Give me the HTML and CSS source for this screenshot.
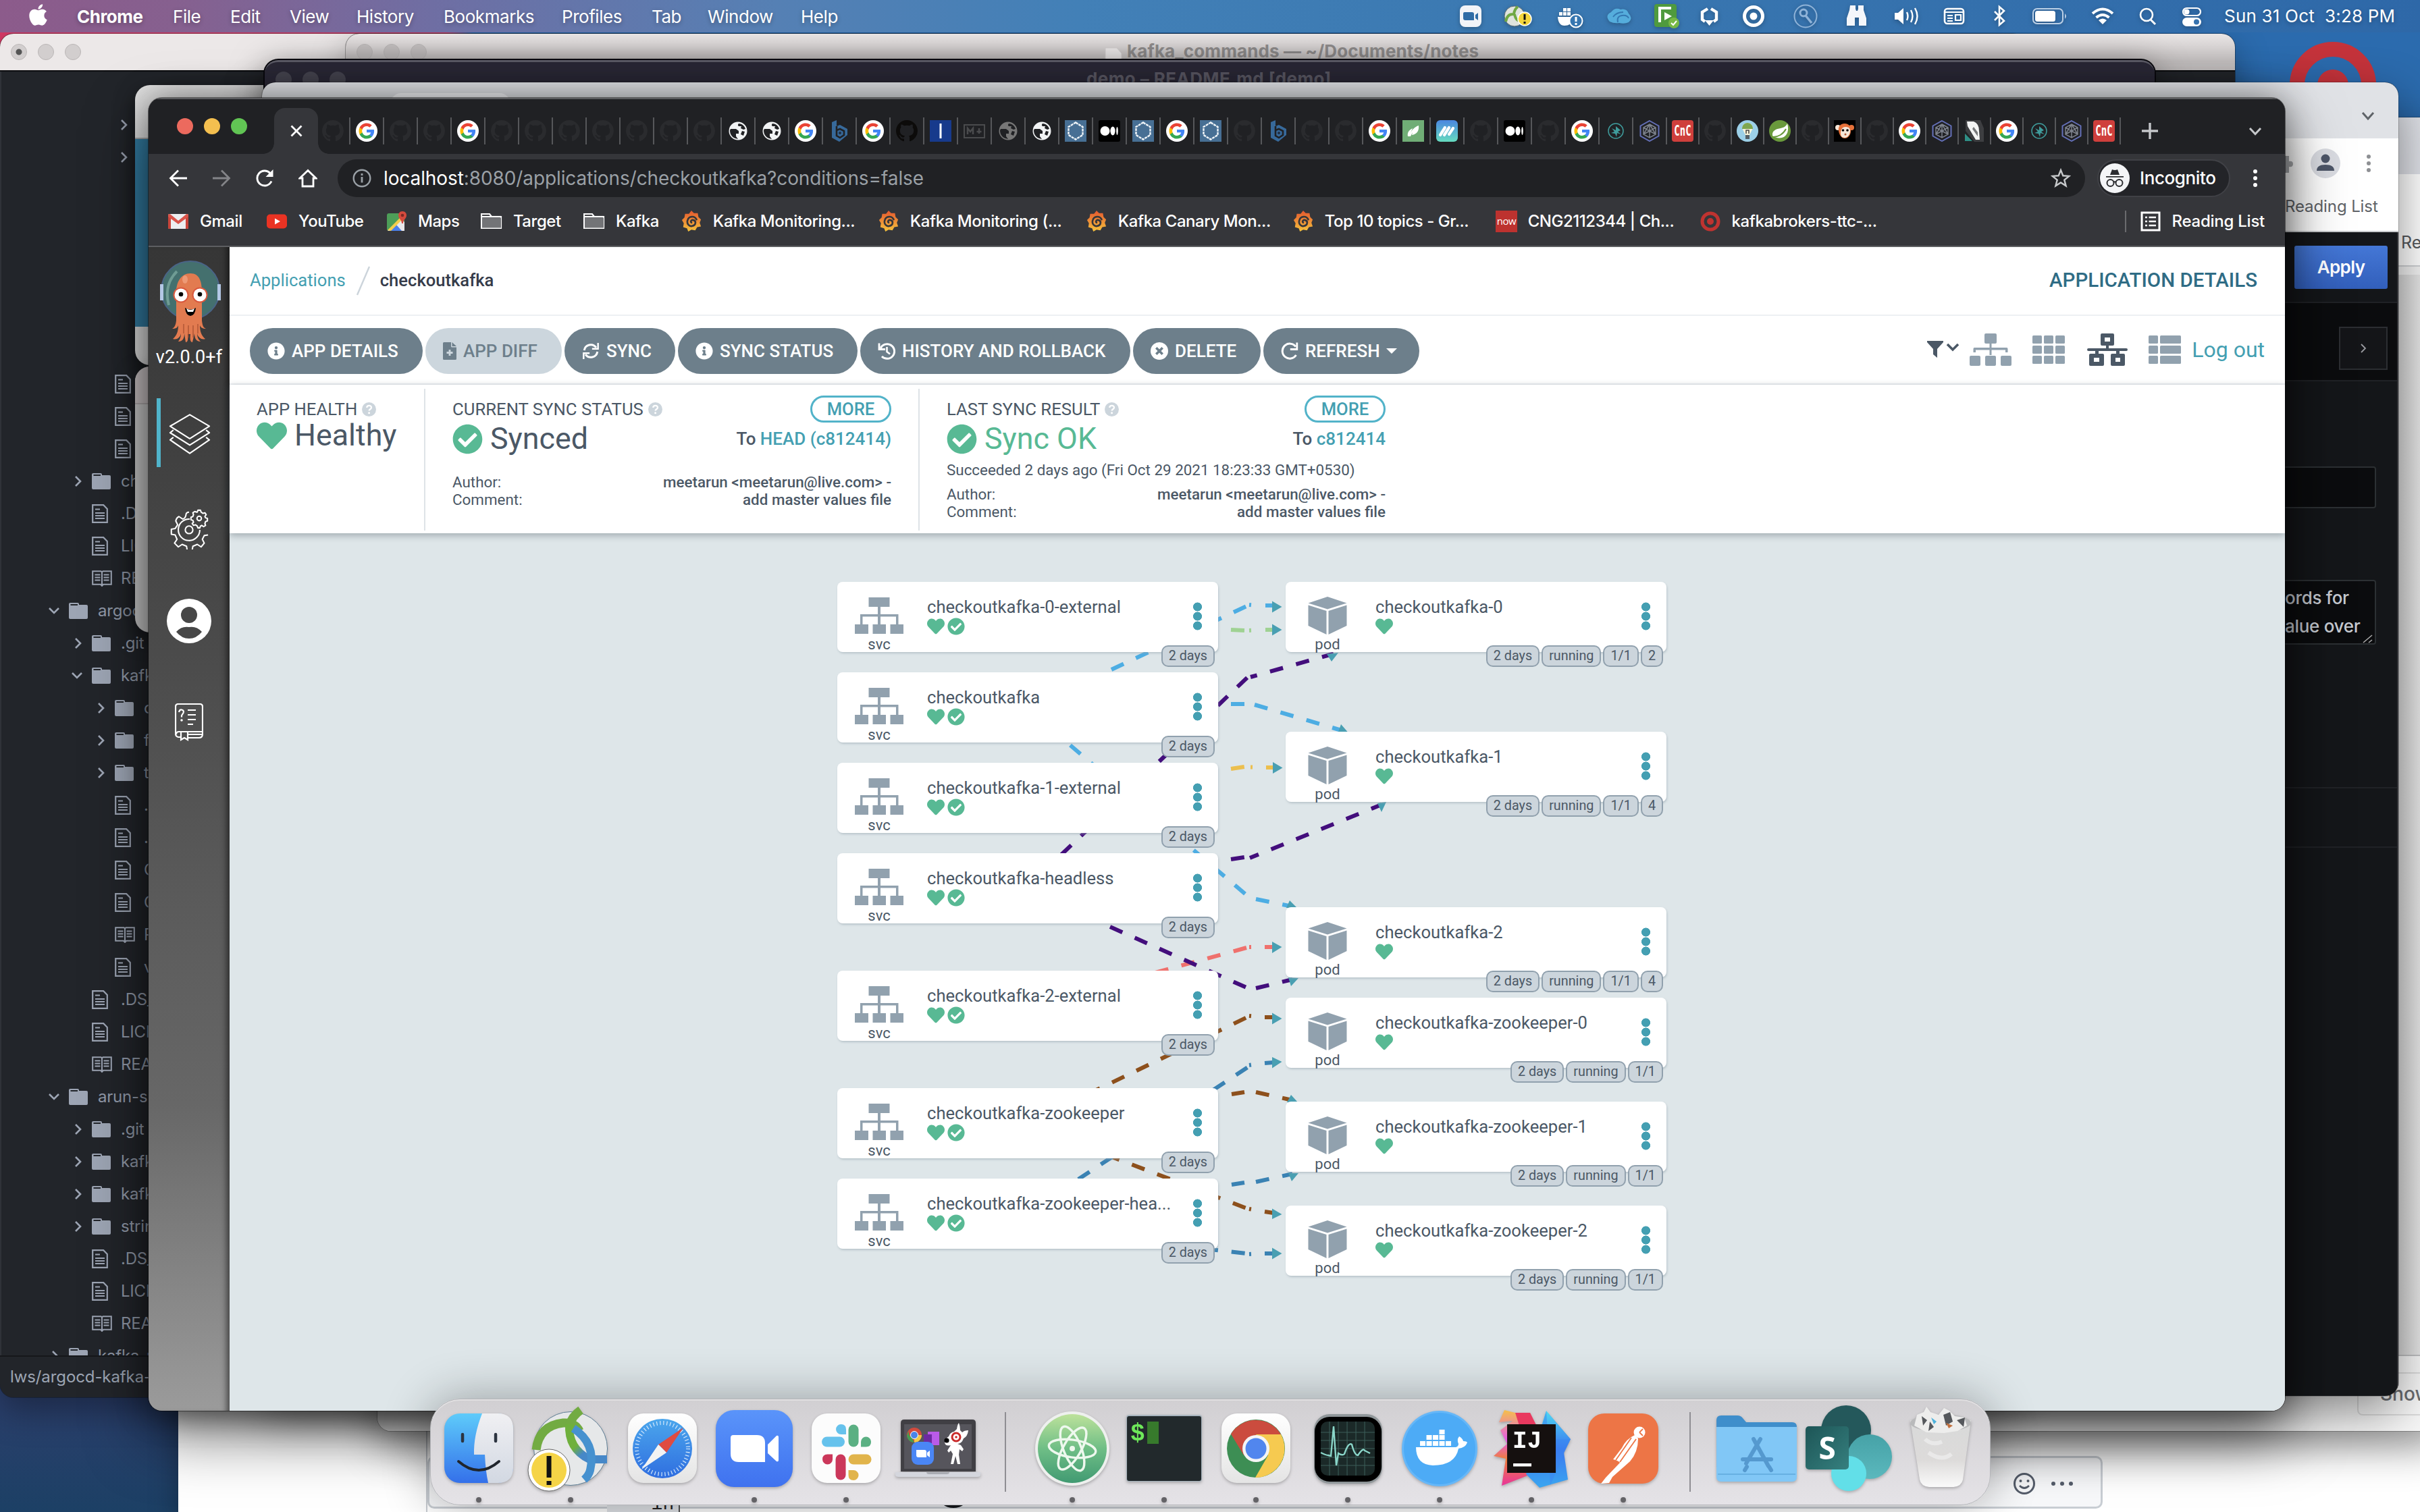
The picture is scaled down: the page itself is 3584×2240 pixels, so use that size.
FILE: index.html
```html
<!DOCTYPE html>
<html lang="en">
<head>
<meta charset="utf-8">
<title>checkoutkafka - Argo CD</title>
<link rel="stylesheet" href="styles.css">
</head>
<body>

<svg class="defs" width="0" height="0" aria-hidden="true">
  <defs>
    <linearGradient id="gFinder" x1="0" y1="0" x2="0" y2="1"><stop offset="0" stop-color="#5ecbfa"/><stop offset="1" stop-color="#3470ea"/></linearGradient>
    <linearGradient id="gFinder2" x1="0" y1="0" x2="0" y2="1"><stop offset="0" stop-color="#f0f0f3"/><stop offset="1" stop-color="#d2d8e2"/></linearGradient>
    <linearGradient id="gZoom" x1="0" y1="0" x2="0" y2="1"><stop offset="0" stop-color="#5a94fa"/><stop offset="1" stop-color="#3f72ef"/></linearGradient>
    <linearGradient id="gSafari" x1="0" y1="0" x2="0" y2="1"><stop offset="0" stop-color="#4ba6ec"/><stop offset="1" stop-color="#2f6ee0"/></linearGradient>
    <linearGradient id="gWhite" x1="0" y1="0" x2="0" y2="1"><stop offset="0" stop-color="#ffffff"/><stop offset="1" stop-color="#e4e4e4"/></linearGradient>
    <linearGradient id="gAtom" x1="0" y1="0" x2="0" y2="1"><stop offset="0" stop-color="#bde29b"/><stop offset=".5" stop-color="#6fbe86"/><stop offset="1" stop-color="#419a72"/></linearGradient>
    <linearGradient id="gAny" x1="0" y1="0" x2="1" y2="1"><stop offset="0" stop-color="#6fb03c"/><stop offset=".4" stop-color="#6fb03c"/><stop offset=".6" stop-color="#4688c8"/><stop offset="1" stop-color="#4688c8"/></linearGradient>
    <linearGradient id="gShare" x1="0" y1="0" x2="1" y2="1"><stop offset="0" stop-color="#1d5556"/><stop offset="1" stop-color="#36807f"/></linearGradient>
    <linearGradient id="gTeal" x1="0" y1="0" x2="0" y2="1"><stop offset="0" stop-color="#46a2a7"/><stop offset="1" stop-color="#5bb8bd"/></linearGradient>
    <linearGradient id="gTrash" x1="0" y1="0" x2="0" y2="1"><stop offset="0" stop-color="#d8d9d9"/><stop offset=".6" stop-color="#dddbda"/><stop offset="1" stop-color="#fafafa"/></linearGradient>
    <linearGradient id="gHash" x1="0" y1="0" x2="0" y2="1"><stop offset="0" stop-color="#4a86e0"/><stop offset="1" stop-color="#66dcc0"/></linearGradient>
    <linearGradient id="gGraf" x1="0" y1="0" x2="0" y2="1"><stop offset="0" stop-color="#e4572f"/><stop offset="1" stop-color="#f5c33c"/></linearGradient>
    <linearGradient id="gJetA" x1="0" y1="0" x2="0" y2="1"><stop offset="0" stop-color="#f5c04a"/><stop offset=".4" stop-color="#e45be8"/><stop offset=".65" stop-color="#f07f3a"/><stop offset="1" stop-color="#e8349b"/></linearGradient>
    <linearGradient id="gJetB" x1="0" y1="0" x2="0" y2="1"><stop offset="0" stop-color="#4fd8f2"/><stop offset=".5" stop-color="#3a78f0"/><stop offset="1" stop-color="#3aa6f0"/></linearGradient>
  </defs>

  <symbol id="fGithub" viewBox="0 0 16 16"><path d="M8 0C3.58 0 0 3.58 0 8c0 3.54 2.29 6.53 5.47 7.59.4.07.55-.17.55-.38 0-.19-.01-.82-.01-1.49-2.01.37-2.53-.49-2.69-.94-.09-.23-.48-.94-.82-1.13-.28-.15-.68-.52-.01-.53.63-.01 1.08.58 1.23.82.72 1.21 1.87.87 2.33.66.07-.52.28-.87.51-1.07-1.78-.2-3.64-.89-3.64-3.95 0-.87.31-1.59.82-2.15-.08-.2-.36-1.02.08-2.12 0 0 .67-.21 2.2.82.64-.18 1.32-.27 2-.27.68 0 1.36.09 2 .27 1.53-1.04 2.2-.82 2.2-.82.44 1.1.16 1.92.08 2.12.51.56.82 1.27.82 2.15 0 3.07-1.87 3.75-3.65 3.95.29.25.54.73.54 1.48 0 1.07-.01 1.93-.01 2.2 0 .21.15.46.55.38A8.013 8.013 0 0016 8c0-4.42-3.58-8-8-8z"/></symbol>
  <symbol id="fGoogle" viewBox="0 0 32 32"><circle cx="16" cy="16" r="16" fill="#fff"/><g transform="translate(3.4 3.4) scale(1.05)"><path fill="#4285F4" d="M22.56 12.25c0-.78-.07-1.53-.2-2.25H12v4.26h5.92c-.26 1.37-1.04 2.53-2.21 3.31v2.77h3.57c2.08-1.92 3.28-4.74 3.28-8.09z"/><path fill="#34A853" d="M12 23c2.97 0 5.46-.98 7.28-2.66l-3.57-2.77c-.98.66-2.23 1.06-3.71 1.06-2.86 0-5.29-1.93-6.16-4.53H2.18v2.84C3.99 20.53 7.7 23 12 23z"/><path fill="#FBBC05" d="M5.84 14.09c-.22-.66-.35-1.36-.35-2.09s.13-1.43.35-2.09V7.07H2.18C1.43 8.55 1 10.22 1 12s.43 3.45 1.18 4.93l3.66-2.84z"/><path fill="#EA4335" d="M12 5.38c1.62 0 3.06.56 4.21 1.64l3.15-3.15C17.45 2.09 14.97 1 12 1 7.7 1 3.99 3.47 2.18 7.07l3.66 2.84c.87-2.6 3.3-4.53 6.16-4.53z"/></g></symbol>
  <symbol id="fGlobe" viewBox="0 0 32 32"><circle cx="16" cy="16" r="13.500" fill="currentColor"/><path d="M5 13h8l4 3v4h-4v4l3 4-4-1c-5-2-8-6-8-12zM17 5c-2 2-1 4 1 4h3l-1 3 4 2 3-1c-1-4-5-8-10-8zM22 16l4 1-2 6-4-2z" fill="#202124"/></symbol>
  <symbol id="fB" viewBox="0 0 32 32"><path d="M5 3l7-3v9l5-2 11 6v9l-12 10L5 26z" fill="#37699a"/><path d="M12 9v14l5 3 6-4v-6l-6-3-5 2" fill="none" stroke="#202124" stroke-width="2.600"/><circle cx="17" cy="19" r="2" fill="#1f2f44"/></symbol>
  <symbol id="fBar" viewBox="0 0 32 32"><path d="M0 0h32v32H0z" fill="#173a8c"/><path d="M14.500 5h3v22h-3z" fill="#fff"/></symbol>
  <symbol id="fMd" viewBox="0 0 32 32"><rect x="1" y="7" width="30" height="19" fill="none" stroke="#4a4b4d" stroke-width="2"/><path d="M6 21v-9l4 5 4-5v9M23 12v8M19.500 17h7" fill="none" stroke="#4a4b4d" stroke-width="2.500"/></symbol>
  <symbol id="fHex" viewBox="0 0 32 32"><path d="M0 0h32v32H0z" fill="#476f94"/><path d="M16 3.500l10.500 6.500v12L16 28.500 5.500 22V10z" fill="none" stroke="#eef3f7" stroke-width="2.400" stroke-dasharray="4 1"/></symbol>
  <symbol id="fMedium" viewBox="0 0 32 32"><rect width="32" height="32" rx="3" fill="#000"/><circle cx="9.500" cy="16" r="7" fill="#fff"/><ellipse cx="21" cy="16" rx="3.600" ry="6.500" fill="#fff"/><ellipse cx="27.500" cy="16" rx="1.300" ry="6" fill="#fff"/></symbol>
  <symbol id="fLeaf" viewBox="0 0 32 32"><path d="M0 0h32v32H0z" fill="#70ad76"/><path d="M8 24c-1-5 1-9 7-12l-4 9c3-7 7-11 13-13 1 8-3 13-10 14l1-4-3 6z" fill="#fff"/></symbol>
  <symbol id="fHash" viewBox="0 0 32 32"><rect width="32" height="32" rx="6" fill="url(#gHash)"/><path d="M6 22l7-11M12 22l7-11M19 21l6-9" fill="none" stroke="#fff" stroke-width="4.200" stroke-linecap="round"/></symbol>
  <symbol id="fTeal" viewBox="0 0 32 32"><circle cx="16" cy="16" r="11" fill="none" stroke="#3f9c9c" stroke-width="1.500"/><path d="M16 9v6l-6-3 4 5-5 2 6 1 2 5 1-6 6 2-5-4 4-2z" fill="#3f9c9c"/></symbol>
  <symbol id="fNet" viewBox="0 0 32 32"><path d="M16 1l13.500 7.500v15L16 31 2.500 23.500v-15z" fill="none" stroke="#6470b8" stroke-width="2"/><path d="M16 6l9 5v10l-9 5-9-5V11zM7 11l18 10M25 11L7 21M16 6v20M16 16L7 11M16 6l9 15M16 6L7 21" fill="none" stroke="#7d828c" stroke-width="1.500"/></symbol>
  <symbol id="fCnc" viewBox="0 0 32 32"><rect width="32" height="32" rx="4" fill="#cf3f3c"/><text x="16" y="14.700" transform="scale(1 1.550)" text-anchor="middle" class="cnc">CnC</text></symbol>
  <symbol id="fBulb" viewBox="0 0 32 32"><circle cx="16" cy="16" r="16" fill="#9cd0e8"/><path d="M16 4c6 0 9 5 7 10l-4 8h-6l-4-8C7 9 10 4 16 4z" fill="#f6f2d8"/><path d="M8 13c0-6 4-9 8-9s8 3 8 9z" fill="#7ea64f"/><path d="M13 22h6v6h-6z" fill="#555f66"/><path d="M14 20v-5h4v5" fill="none" stroke="#444" stroke-width="1.500"/></symbol>
  <symbol id="fSpring" viewBox="0 0 32 32"><circle cx="16" cy="16" r="16" fill="#6a9a3c"/><path d="M5 23c-1-8 6-10 12-11 5-1 8-3 10-7 3 10 0 19-8 21-5 1-10 0-14-3z" fill="#fff"/><path d="M6 25c7 0 15-4 19-12" fill="none" stroke="#6a9a3c" stroke-width="2"/></symbol>
  <symbol id="fMonkey" viewBox="0 0 32 32"><path d="M0 0h32v32H0z" fill="#000"/><circle cx="6" cy="11" r="4" fill="#f4e6d8"/><circle cx="26" cy="11" r="4" fill="#e5713a"/><path d="M16 5c-7 0-10 5-9 11s4 11 9 11 9-5 9-11-2-11-9-11z" fill="#e5713a"/><path d="M17 10c5 0 7 2 7 6s-3 10-8 10-6-3-6-7 2-9 7-9z" fill="#f4e6d8"/><circle cx="13.500" cy="15" r="1.800"/><circle cx="20" cy="15" r="1.800"/><circle cx="17" cy="21" r="1.500" fill="#b35a35"/></symbol>
  <symbol id="fN" viewBox="0 0 32 32"><path d="M3 0h22l5 12v20H16L3 16z" fill="#3d3e41"/><path d="M5 2h10q8 3 8 14l1 13h-6L6 9z" fill="#f3f4f4"/><path d="M15 10l6 8v6l-8-11z" fill="#77797b"/><path d="M2 20l11 11H2z" fill="#2f8f86"/></symbol>
  <symbol id="fGraf" viewBox="0 0 32 34"><path fill="url(#gGraf)" d="M16 0l4 4 6 0 1 6 4 4-2 5 2 6-6 1-3 5-6-1-5 3-2-5-6-2 1-6-3-5 4-4 1-6 6 0z"/><path d="M24 14c-3-6-12-6-14 1-2 6 3 11 8 9 5-1 6-8 1-9-3-1-5 2-3 4" fill="none" stroke="#35363a" stroke-width="2.800" stroke-linecap="round"/></symbol>
  <symbol id="folder" viewBox="0 0 32 32"><path d="M1 5h12l3 4h14v17H1z" fill="#35363a" stroke="#fff" stroke-width="2.200"/><path d="M2 10.500h28v15H2z" fill="#737477"/><path d="M1 9h29" stroke="#fff" stroke-width="2.200"/></symbol>

  <symbol id="check" viewBox="0 0 512 512"><path fill="#58b994" d="M504 256c0 136.967-111.033 248-248 248S8 392.967 8 256 119.033 8 256 8s248 111.033 248 248zM227.314 387.314l184-184c6.248-6.248 6.248-16.379 0-22.627l-22.627-22.627c-6.248-6.249-16.379-6.249-22.628 0L216 308.118l-70.059-70.059c-6.248-6.248-16.379-6.248-22.628 0l-22.627 22.627c-6.248 6.248-6.248 16.379 0 22.627l104 104c6.249 6.249 16.379 6.249 22.628.001z"/></symbol>
  <symbol id="heart" viewBox="0 0 512 512"><path fill="#58b994" d="M462.3 62.6C407.5 15.9 326 24.3 275.7 76.200L256 96.500l-19.700-20.300C186.100 24.300 104.500 15.900 49.700 62.600c-62.800 53.600-66.100 149.800-9.900 207.900l193.500 199.800c12.500 12.900 32.800 12.900 45.300 0l193.500-199.800c56.300-58.100 53-154.300-9.800-207.900z"/></symbol>
  <symbol id="info" viewBox="0 0 512 512"><path fill="currentColor" d="M256 8C119.043 8 8 119.083 8 256c0 136.997 111.043 248 248 248s248-111.003 248-248C504 119.083 392.957 8 256 8zm0 110c23.196 0 42 18.804 42 42s-18.804 42-42 42-42-18.804-42-42 18.804-42 42-42zm56 254c0 6.627-5.373 12-12 12h-88c-6.627 0-12-5.373-12-12v-24c0-6.627 5.373-12 12-12h12v-64h-12c-6.627 0-12-5.373-12-12v-24c0-6.627 5.373-12 12-12h64c6.627 0 12 5.373 12 12v100h12c6.627 0 12 5.373 12 12v24z"/></symbol>
  <symbol id="help" viewBox="0 0 22 22"><circle cx="11" cy="11" r="11" fill="#ccd5dc"/><path d="M7.500 8.200c.4-4.200 7.200-4 7.200-.2 0 2.800-3.600 2.600-3.600 5.200" fill="none" stroke="#fff" stroke-width="2.400"/><circle cx="11.100" cy="16.600" r="1.600" fill="#fff"/></symbol>
  <symbol id="svc" viewBox="0 0 72 54"><g fill="#91a1ae"><path d="M20.500 0h31v14h-31zM0 40h20v14H0zM26.500 40h19.500v14H26.500zM52.500 40H72v14H52.500z"/><path d="M34 14h4v12h-4zM8 25h56.500v3.500H8zM8 28h3.500v12H8zM34 28h4v12h-4zM61 28h3.500v12H61z"/></g></symbol>
  <symbol id="pod" viewBox="0 0 58 56"><g fill="#91a1ae"><path d="M29 0l28.500 9.500L29 18.500.500 9.500z"/><path d="M.500 12.500L27.500 21v35L.500 43z"/><path d="M57.500 12.500L30.500 21v35l27-13z"/></g></symbol>

  <symbol id="chevR" viewBox="0 0 12 20"><path d="M2 3l7 7-7 7" fill="none" stroke="#9da5b4" stroke-width="2.600"/></symbol>
  <symbol id="chevD" viewBox="0 0 20 12"><path d="M3 2l7 7 7-7" fill="none" stroke="#9da5b4" stroke-width="2.600"/></symbol>
  <symbol id="tFolder" viewBox="0 0 28 24"><path d="M0 2q0-2 2-2h11q2 0 2 2v1h11q2 0 2 2v17q0 2-2 2H2q-2 0-2-2z" fill="#9da5b4"/><path d="M2.500 2h10.500v2H2.500z" fill="#22252a"/></symbol>
  <symbol id="tFile" viewBox="0 0 24 28"><path d="M1.200 1.200h16L22.800 7v19.800H1.200z" fill="none" stroke="#9da5b4" stroke-width="2.200"/><path d="M5 7.500h7M5 13h14M5 17h14M5 21h14" stroke="#9da5b4" stroke-width="2"/></symbol>
  <symbol id="tBook" viewBox="0 0 30 24"><path d="M1.200 1.200h12.300L15 2.500l1.500-1.300h12.300v19.600H17L15 23l-2-2.200H1.200zM15 2v20M4.500 6.500h8M4.500 10.500h8M4.500 14.500h8M17.500 6.500h8M17.500 10.500h8M17.500 14.500h8" fill="none" stroke="#9da5b4" stroke-width="2"/></symbol>
</svg>

<main class="desktop">
  <svg class="wallpaper-logo" viewBox="0 0 130 130"><circle cx="65" cy="65" r="53" fill="none" stroke="#c5333b" stroke-width="22"/><circle cx="65" cy="65" r="23" fill="#c5333b"/></svg>

  <!-- chat window along the bottom -->
  <section class="win chat">
    <div class="chat-pane">
      <span class="chat-word">--in</span>
      <i class="chat-dot"></i>
      <div class="composer">
        <svg class="composer-icons" viewBox="0 0 120 40"><circle cx="22" cy="20" r="14.500" fill="none" stroke="#555d6b" stroke-width="3"/><circle cx="16.500" cy="16" r="2" fill="#555d6b"/><circle cx="27.500" cy="16" r="2" fill="#555d6b"/><path d="M15 23q7 7 14 0" fill="none" stroke="#555d6b" stroke-width="2.600"/><g fill="#555d6b"><circle cx="65" cy="20" r="3"/><circle cx="78" cy="20" r="3"/><circle cx="91" cy="20" r="3"/></g></svg>
      </div>
    </div>
  </section>

  <!-- browser window behind, right edge -->
  <section class="win side-browser">
    <div class="sb-strip"></div>
    <div class="sb-tools"><span>Re</span></div>
    <div class="sb-page"></div>
    <div class="sb-foot"><span>Show</span></div>
  </section>

  <!-- editor windows -->
  <section class="win editor editor-a">
    <header class="ed-title"><i class="dot edited"></i><i class="dot"></i><i class="dot"></i></header>
    <div class="tree">
      <div class="row d4"><svg class="cr"><use href="#chevR"/></svg></div>
      <div class="row d4"><svg class="cr"><use href="#chevR"/></svg></div>
      <div class="row gap"></div>
      <div class="row d3"><svg class="fi"><use href="#tFile"/></svg></div>
      <div class="row d3"><svg class="fi"><use href="#tFile"/></svg></div>
      <div class="row d3"><svg class="fi"><use href="#tFile"/></svg></div>
      <div class="row d2"><svg class="cr"><use href="#chevR"/></svg><svg class="fo"><use href="#tFolder"/></svg><span>charts</span></div>
      <div class="row d2"><svg class="fi"><use href="#tFile"/></svg><span>.DS_Store</span></div>
      <div class="row d2"><svg class="fi"><use href="#tFile"/></svg><span>LICENSE</span></div>
      <div class="row d2"><svg class="bo"><use href="#tBook"/></svg><span>README</span></div>
      <div class="row d1"><svg class="cd"><use href="#chevD"/></svg><svg class="fo"><use href="#tFolder"/></svg><span>argocd</span></div>
      <div class="row d2"><svg class="cr"><use href="#chevR"/></svg><svg class="fo"><use href="#tFolder"/></svg><span>.git</span></div>
      <div class="row d2"><svg class="cd"><use href="#chevD"/></svg><svg class="fo"><use href="#tFolder"/></svg><span>kafka</span></div>
      <div class="row d3"><svg class="cr"><use href="#chevR"/></svg><svg class="fo"><use href="#tFolder"/></svg><span>c</span></div>
      <div class="row d3"><svg class="cr"><use href="#chevR"/></svg><svg class="fo"><use href="#tFolder"/></svg><span>f</span></div>
      <div class="row d3"><svg class="cr"><use href="#chevR"/></svg><svg class="fo"><use href="#tFolder"/></svg><span>t</span></div>
      <div class="row d3"><svg class="fi"><use href="#tFile"/></svg><span>.</span></div>
      <div class="row d3"><svg class="fi"><use href="#tFile"/></svg><span>.</span></div>
      <div class="row d3"><svg class="fi"><use href="#tFile"/></svg><span>C</span></div>
      <div class="row d3"><svg class="fi"><use href="#tFile"/></svg><span>C</span></div>
      <div class="row d3"><svg class="bo"><use href="#tBook"/></svg><span>R</span></div>
      <div class="row d3"><svg class="fi"><use href="#tFile"/></svg><span>v</span></div>
      <div class="row d2"><svg class="fi"><use href="#tFile"/></svg><span>.DS_</span></div>
      <div class="row d2"><svg class="fi"><use href="#tFile"/></svg><span>LICE</span></div>
      <div class="row d2"><svg class="bo"><use href="#tBook"/></svg><span>REA</span></div>
      <div class="row d1"><svg class="cd"><use href="#chevD"/></svg><svg class="fo"><use href="#tFolder"/></svg><span>arun-s</span></div>
      <div class="row d2"><svg class="cr"><use href="#chevR"/></svg><svg class="fo"><use href="#tFolder"/></svg><span>.git</span></div>
      <div class="row d2"><svg class="cr"><use href="#chevR"/></svg><svg class="fo"><use href="#tFolder"/></svg><span>kafka</span></div>
      <div class="row d2"><svg class="cr"><use href="#chevR"/></svg><svg class="fo"><use href="#tFolder"/></svg><span>kafka</span></div>
      <div class="row d2"><svg class="cr"><use href="#chevR"/></svg><svg class="fo"><use href="#tFolder"/></svg><span>string</span></div>
      <div class="row d2"><svg class="fi"><use href="#tFile"/></svg><span>.DS_</span></div>
      <div class="row d2"><svg class="fi"><use href="#tFile"/></svg><span>LICE</span></div>
      <div class="row d2"><svg class="bo"><use href="#tBook"/></svg><span>REA</span></div>
      <div class="row d1"><svg class="cr"><use href="#chevR"/></svg><svg class="fo"><use href="#tFolder"/></svg><span>kafka-p</span></div>
    </div>
    <footer class="ed-status">lws/argocd-kafka-</footer>
  </section>

  <section class="win editor editor-b">
    <header class="ed-title"><i class="dot"></i><i class="dot"></i><i class="dot"></i><svg class="doc" viewBox="0 0 26 34"><path d="M1 1h17l7 8v25H1z" fill="#efecec" stroke="#d4d0d0"/></svg><span>kafka_commands — ~/Documents/notes</span></header>
  </section>

  <section class="win finder-a"><div class="blue"></div></section>
  <section class="win finder-b"><div class="bar"></div></section>

  <section class="win ide"><i class="dot"></i><i class="dot"></i><i class="dot"></i><span>demo – README.md [demo]</span></section>

  <!-- light browser window -->
  <section class="win light">
    <div class="lt-strip"><i class="lt-tab"></i><svg class="lt-chev" viewBox="0 0 20 14"><path d="M2 2l8 9 8-9" fill="none" stroke="#5f6368" stroke-width="3"/></svg></div>
    <div class="lt-tools">
      <svg class="lt-icons" viewBox="0 0 168 50"><path d="M0 14h6v8q6-1 6 4t-6 4v9H0z" fill="#a9abae"/><circle cx="60" cy="25" r="22" fill="#dadce2"/><circle cx="60" cy="18" r="6.500" fill="#4d5668"/><path d="M47 36q0-9 13-9t13 9z" fill="#4d5668"/><g fill="#8e9094"><circle cx="124" cy="15" r="3"/><circle cx="124" cy="25" r="3"/><circle cx="124" cy="35" r="3"/></g></svg>
      <span>Reading List</span>
    </div>
    <div class="lt-page">
      <div class="lt-row apply"><b>Apply</b></div>
      <div class="lt-row next"><span><svg viewBox="0 0 10 16"><path d="M2 2l6 6-6 6" fill="none" stroke="#9a9ba0" stroke-width="1.800"/></svg></span></div>
      <div class="lt-input"></div>
      <div class="lt-area"><p>ords for</p><p>alue over</p><svg viewBox="0 0 16 14"><path d="M1 13L14 2M9 13l5-4" stroke="#aaa" stroke-width="1.600"/></svg></div>
      <div class="lt-sep"></div>
    </div>
  </section>

  <!-- foreground browser window -->
  <section class="win browser">
    <div class="tabs">
      <div class="lights"><i></i><i></i><i></i></div>
      <div class="tab-active"><svg viewBox="0 0 20 20"><path d="M2.500 2.500l15 15M17.500 2.500l-15 15" stroke="#fff" stroke-width="2.800"/></svg></div>
      <div class="slot"><svg class="dim"><use href="#fGithub"/></svg></div>
      <div class="slot"><svg><use href="#fGoogle"/></svg></div>
      <div class="slot"><svg class="dim"><use href="#fGithub"/></svg></div>
      <div class="slot"><svg class="dim"><use href="#fGithub"/></svg></div>
      <div class="slot"><svg><use href="#fGoogle"/></svg></div>
      <div class="slot"><svg class="dim"><use href="#fGithub"/></svg></div>
      <div class="slot"><svg class="dim"><use href="#fGithub"/></svg></div>
      <div class="slot"><svg class="dim"><use href="#fGithub"/></svg></div>
      <div class="slot"><svg class="dim"><use href="#fGithub"/></svg></div>
      <div class="slot"><svg class="dim"><use href="#fGithub"/></svg></div>
      <div class="slot"><svg class="dim"><use href="#fGithub"/></svg></div>
      <div class="slot"><svg class="dim"><use href="#fGithub"/></svg></div>
      <div class="slot"><svg class="lit"><use href="#fGlobe"/></svg></div>
      <div class="slot"><svg class="lit"><use href="#fGlobe"/></svg></div>
      <div class="slot"><svg><use href="#fGoogle"/></svg></div>
      <div class="slot"><svg><use href="#fB"/></svg></div>
      <div class="slot"><svg><use href="#fGoogle"/></svg></div>
      <div class="slot"><svg class="black"><use href="#fGithub"/></svg></div>
      <div class="slot"><svg><use href="#fBar"/></svg></div>
      <div class="slot"><svg><use href="#fMd"/></svg></div>
      <div class="slot"><svg class="grey"><use href="#fGlobe"/></svg></div>
      <div class="slot"><svg class="lit"><use href="#fGlobe"/></svg></div>
      <div class="slot"><svg><use href="#fHex"/></svg></div>
      <div class="slot"><svg><use href="#fMedium"/></svg></div>
      <div class="slot"><svg><use href="#fHex"/></svg></div>
      <div class="slot"><svg><use href="#fGoogle"/></svg></div>
      <div class="slot"><svg><use href="#fHex"/></svg></div>
      <div class="slot"><svg class="dim"><use href="#fGithub"/></svg></div>
      <div class="slot"><svg><use href="#fB"/></svg></div>
      <div class="slot"><svg class="dim"><use href="#fGithub"/></svg></div>
      <div class="slot"><svg class="dim"><use href="#fGithub"/></svg></div>
      <div class="slot"><svg><use href="#fGoogle"/></svg></div>
      <div class="slot"><svg><use href="#fLeaf"/></svg></div>
      <div class="slot"><svg><use href="#fHash"/></svg></div>
      <div class="slot"><svg class="dim"><use href="#fGithub"/></svg></div>
      <div class="slot"><svg><use href="#fMedium"/></svg></div>
      <div class="slot"><svg class="dim"><use href="#fGithub"/></svg></div>
      <div class="slot"><svg><use href="#fGoogle"/></svg></div>
      <div class="slot"><svg><use href="#fTeal"/></svg></div>
      <div class="slot"><svg><use href="#fNet"/></svg></div>
      <div class="slot thin"><svg><use href="#fCnc"/></svg></div>
      <div class="slot thin"><svg class="dim"><use href="#fGithub"/></svg></div>
      <div class="slot thin"><svg><use href="#fBulb"/></svg></div>
      <div class="slot thin"><svg><use href="#fSpring"/></svg></div>
      <div class="slot thin"><svg class="dim"><use href="#fGithub"/></svg></div>
      <div class="slot thin"><svg><use href="#fMonkey"/></svg></div>
      <div class="slot thin"><svg class="dim"><use href="#fGithub"/></svg></div>
      <div class="slot thin"><svg><use href="#fGoogle"/></svg></div>
      <div class="slot thin"><svg><use href="#fNet"/></svg></div>
      <div class="slot thin"><svg><use href="#fN"/></svg></div>
      <div class="slot thin"><svg><use href="#fGoogle"/></svg></div>
      <div class="slot thin"><svg><use href="#fTeal"/></svg></div>
      <div class="slot thin"><svg><use href="#fNet"/></svg></div>
      <div class="slot thin"><svg><use href="#fCnc"/></svg></div>
      <svg class="plus" viewBox="0 0 24 24"><path d="M12 0v24M0 12h24" stroke="#c5c7ca" stroke-width="3.400"/></svg>
      <svg class="more-tabs" viewBox="0 0 20 14"><path d="M2 2l8 8.500L18 2" fill="none" stroke="#c5c7ca" stroke-width="3"/></svg>
    </div>

    <div class="toolbar">
      <svg class="nav" viewBox="0 0 28 28"><path d="M27 14H3M14 2.500L2.500 14 14 25.500" fill="none" stroke="#fff" stroke-width="2.800"/></svg>
      <svg class="nav" viewBox="0 0 28 28"><path d="M1 14h24M14 2.500L25.500 14 14 25.500" fill="none" stroke="#838488" stroke-width="2.800"/></svg>
      <svg class="nav" viewBox="0 0 28 28"><path d="M24 18.500A11 11 0 1 1 22 6.500" fill="none" stroke="#fff" stroke-width="2.900"/><path d="M26.500 1v11h-11z" fill="#fff"/></svg>
      <svg class="nav" viewBox="0 0 28 28"><path d="M14 2.500L2 14h4v12h16V14h4z" fill="none" stroke="#fff" stroke-width="2.800" stroke-linejoin="miter"/></svg>
      <div class="omnibox">
        <svg viewBox="0 0 28 28"><circle cx="14" cy="14" r="12.300" fill="none" stroke="#9aa0a6" stroke-width="2.400"/><path d="M14 12v8.500M14 7v3" stroke="#9aa0a6" stroke-width="2.800"/></svg>
        <span class="url"><b>localhost</b>:8080/applications/checkoutkafka?conditions=false</span>
        <svg viewBox="0 0 30 30"><path d="M15 3l3.300 8.300 8.900.6-6.900 5.700 2.300 8.700L15 21.500l-7.600 4.800 2.300-8.700-6.900-5.700 8.900-.6z" fill="none" stroke="#c8cacc" stroke-width="2.400"/></svg>
      </div>
      <div class="incog">
        <svg viewBox="0 0 44 44"><circle cx="22" cy="22" r="22" fill="#f4f5f7"/><path d="M15 17l3-8q4 2 8 0l3 8zM9 19h26v1.800H9z" fill="#2b2c30"/><circle cx="15.500" cy="29" r="5" fill="none" stroke="#2b2c30" stroke-width="2"/><circle cx="28.500" cy="29" r="5" fill="none" stroke="#2b2c30" stroke-width="2"/><path d="M20 28q2-1.500 4 0" fill="none" stroke="#2b2c30" stroke-width="2"/></svg>
        <span>Incognito</span>
      </div>
      <svg class="kebab" viewBox="0 0 8 28"><g fill="#fff"><circle cx="4" cy="4" r="3"/><circle cx="4" cy="14" r="3"/><circle cx="4" cy="24" r="3"/></g></svg>
    </div>

    <div class="bookmarks">
      <a class="w1"><svg viewBox="0 0 32 32"><rect x="1" y="5" width="30" height="22" rx="2" fill="#eceef0"/><path d="M1 26V7l4 3v17H3q-2 0-2-1zM31 26V7l-4 3v17h2q2 0 2-1z" fill="#c9453b"/><path d="M1 6q2-2 4 0l11 9 11-9q2-2 4 0v3L16 20 1 9z" fill="#d9544a"/></svg>Gmail</a>
      <a class="w2"><svg viewBox="0 0 32 32"><rect x="1" y="5.500" width="30" height="21" rx="5" fill="#ea3323"/><path d="M13 11.500l8 4.500-8 4.500z" fill="#fff"/></svg>YouTube</a>
      <a class="w3"><svg viewBox="0 0 32 32"><rect x="2" y="4" width="26" height="26" rx="3" fill="#4d9e58"/><path d="M3 30L22 11l6 6v13z" fill="#e8e8ea"/><path d="M6 30l10-9 8 9z" fill="#4a80ec"/><path d="M3 29L21 11l3 3L8 30z" fill="#f3cd4c"/><path d="M25 1c4 0 6 3 6 6 0 5-5 6-5 12h-2c0-6-5-7-5-12 0-3 2-6 6-6z" fill="#d54a3d"/><circle cx="25" cy="7" r="2.300" fill="#7c2a24"/></svg>Maps</a>
      <a class="w4"><svg viewBox="0 0 32 32"><use href="#folder"/></svg>Target</a>
      <a class="w5"><svg viewBox="0 0 32 32"><use href="#folder"/></svg>Kafka</a>
      <a class="w6"><svg><use href="#fGraf"/></svg>Kafka Monitoring...</a>
      <a class="w7"><svg><use href="#fGraf"/></svg>Kafka Monitoring (...</a>
      <a class="w8"><svg><use href="#fGraf"/></svg>Kafka Canary Mon...</a>
      <a class="w9"><svg><use href="#fGraf"/></svg>Top 10 topics - Gr...</a>
      <a class="w10"><svg viewBox="0 0 32 32"><path d="M0 0h32v32H0z" fill="#bd322f"/><text x="16" y="20.500" text-anchor="middle" class="now">now</text></svg>CNG2112344 | Ch...</a>
      <a class="w11"><svg viewBox="0 0 32 32"><circle cx="16" cy="16" r="12" fill="none" stroke="#bf3330" stroke-width="5"/><circle cx="16" cy="16" r="5" fill="#bf3330"/></svg>kafkabrokers-ttc-...</a>
      <a class="reading"><svg viewBox="0 0 32 32"><rect x="3" y="3" width="26" height="26" fill="none" stroke="#fff" stroke-width="3"/><path d="M8 10h3M8 16h3M8 22h3M13.500 10H24M13.500 16H24M13.500 22H24" stroke="#fff" stroke-width="2.600"/></svg>Reading List</a>
    </div>

    <div class="page">
      <aside class="side">
        <svg class="logo" viewBox="0 0 120 146">
          <ellipse cx="62" cy="64" rx="43" ry="43" fill="#44706e" stroke="#4a6487" stroke-width="2"/>
          <path d="M30 86Q22 56 42 36" fill="none" stroke="#6f9c94" stroke-width="4"/>
          <path d="M17 55h5v24h-5zM102 55h5v24h-5z" fill="#b4c8e6"/>
          <path d="M62 39c-14 0-21 13-21 28v42c-1 8-3 10-6 12 6 0 8-2 9-5 0 10-3 16-8 20 6 2 11-2 12-8 0 6-2 9-4 12 6 0 9-4 9-12l2 13c3 0 4-4 3-12h4c-1 8 0 12 3 12l3-13c0 8 3 12 9 12-3-3-5-6-5-12 1 6 7 10 12 8-5-4-8-10-8-20 1 3 4 5 9 5-4-2-5-4-6-12V67c0-15-3-28-17-28z" fill="#e27b50"/>
          <ellipse cx="54" cy="48" rx="4" ry="6" fill="#ee9a76"/>
          <circle cx="48" cy="71" r="11.500" fill="#d9593f"/><circle cx="76" cy="71" r="11.500" fill="#d9593f"/>
          <circle cx="48" cy="71" r="9.500" fill="#fff"/><circle cx="76" cy="71" r="9.500" fill="#fff"/>
          <circle cx="48" cy="70" r="3.300"/><circle cx="76" cy="70" r="3.300"/>
          <path d="M54 90q8 5 16 0-1 11-8 12-7-1-8-12z"/><path d="M56 91q6 4 12 0l-2 5h-8z" fill="#fff"/>
          <path d="M52 114v14M59 116v18M66 116v18M73 114v14" stroke="#a54d30" stroke-width="1.200"/>
        </svg>
        <p class="ver">v2.0.0+f</p>
        <svg class="side-icon active" viewBox="0 0 64 64"><g fill="none" stroke="#fff" stroke-width="2.200" stroke-linejoin="round"><path d="M32 2.500L62 20 32 39 2 20z"/><path d="M7 26l-5 4 30 19 30-19-5-4"/><path d="M7 37l-5 4 30 20.500L62 41l-5-4"/></g></svg>
        <svg class="side-icon gears" viewBox="0 0 64 64"><g fill="none" stroke="#fff" stroke-width="2.200" stroke-linejoin="round"><path d="M32 5q-5 0-5 5-1 5-5 6l-6-4q-4 2-5 7l3 6-4 6-6 1v8l6 1 3 7-4 6 6 6 6-4 7 3 1 6h8l1-6 7-3 6 4 5-6-3-6 3-6 6-1"/><path d="M33 16a17 17 0 1 0 16 17"/><circle cx="32" cy="33" r="6"/><path d="M45 5l1-3h4l1 3 3 2 3-1 2 3-2 3 1 2 3 1v4l-3 1-1 3 1 3-3 2-3-2-2 1-1 3h-3l-1-3-3-2-3 1-2-3 2-2-1-3-3-1v-4l3-1 1-3-1-3 3-2 3 1z"/><circle cx="48" cy="15" r="3.500"/></g></svg>
        <svg class="side-icon user" viewBox="0 0 66 66"><circle cx="33" cy="33" r="33" fill="#fff"/><circle cx="33" cy="24" r="12" fill="#474747"/><path d="M14 49q8-9 19-7 11-2 19 7-8 10-19 10t-19-10z" fill="#474747"/></svg>
        <svg class="side-icon book" viewBox="0 0 42 56"><g fill="none" stroke="#fff" stroke-width="2.200"><path d="M8 50H5q-4-1-4-5V5q0-4 4-4h32q4 0 4 4v40q0 6-5 6H19"/><path d="M2 46q0-4 4-4h34M19 46h21"/><path d="M9 42v12l5-3 5 3V42"/><path d="M19 10h12M19 17h12M19 24h12M19 31h8"/><path d="M6 13q1-4 4-3.500 4 1 2.500 4.500L10 18v2.500"/></g><circle cx="10" cy="25" r="1.800" fill="#fff"/></svg>
      </aside>

      <div class="content">
        <header class="crumbs">
          <a>Applications</a><svg viewBox="0 0 22 44"><path d="M20 1L2 43" stroke="#ccd4db" stroke-width="2.400"/></svg><b>checkoutkafka</b>
          <strong>APPLICATION DETAILS</strong>
        </header>
        <div class="actions">
          <button class="b1"><svg><use href="#info"/></svg>APP DETAILS</button>
          <button class="b2 off"><svg class="narrow" viewBox="0 0 20 26"><path d="M0 1.500Q0 0 1.500 0H12v6q0 1.500 1.500 1.500H20V24.500q0 1.500-1.500 1.500h-17Q0 26 0 24.500zM13.500 0L20 6h-6.500z" fill="#6d7f8b"/><path d="M10 11v9M5.500 15.500h9" stroke="#ccd6dd" stroke-width="2.800"/></svg>APP DIFF</button>
          <button class="b3"><svg viewBox="0 0 28 28"><g fill="none" stroke="#fff" stroke-width="3.200"><path d="M3.500 13A10.500 10.500 0 0 1 22.500 8.500M24.500 15A10.500 10.500 0 0 1 5.500 19.500"/><path d="M25.500 1v9.500H16M2.500 27v-9.500H12" stroke-width="2.600"/></g></svg>SYNC</button>
          <button class="b4"><svg><use href="#info"/></svg>SYNC STATUS</button>
          <button class="b5"><svg viewBox="0 0 26 26"><g fill="none" stroke="#fff" stroke-width="3"><path d="M4 9A10.800 10.800 0 1 1 6 21"/><path d="M2 1.500v9h9" stroke-width="2.800"/><path d="M13.500 7v7l4.500 3.500" stroke-width="2.600"/></g></svg>HISTORY AND ROLLBACK</button>
          <button class="b6"><svg viewBox="0 0 26 26"><circle cx="13" cy="13" r="13" fill="#fff"/><path d="M8.300 8.300l9.400 9.400M17.700 8.300l-9.400 9.400" stroke="#6d7f8b" stroke-width="3.600"/></svg>DELETE</button>
          <button class="b7"><svg viewBox="0 0 26 26"><g fill="none" stroke="#fff" stroke-width="3"><path d="M22.500 19A11 11 0 1 1 22 6.500"/><path d="M23.800.500v10h-10" stroke-width="2.800"/></g></svg>REFRESH<svg class="caret" viewBox="0 0 16 8"><path d="M0 0h16L8 8z" fill="#fff"/></svg></button>
          <div class="views">
            <svg class="v-filter" viewBox="0 0 48 28"><path d="M0 1h24v2L15 13v13l-6-5v-8L0 3z" fill="#4b5866"/><path d="M30 6l8 8 8-8" fill="none" stroke="#4b5866" stroke-width="3.600"/></svg>
            <svg class="v-tree" viewBox="0 0 62 48"><g fill="#91a1ae"><rect x="22" y="0" width="18" height="15" rx="2"/><path d="M29.500 15h3v6h-3zM6 21h49q1.500 0 1.500 2v5H53v-3.500H32.500V32h-3v-7.500H9V28H5.500v-5q0-2 1.500-2z"/><rect x="0" y="33" width="16" height="15" rx="2"/><rect x="23" y="33" width="16" height="15" rx="2"/><rect x="46" y="33" width="16" height="15" rx="2"/></g></svg>
            <svg class="v-grid" viewBox="0 0 48 42"><g fill="#91a1ae"><rect width="14" height="12" rx="1.500"/><rect x="17" width="14" height="12" rx="1.500"/><rect x="34" width="14" height="12" rx="1.500"/><rect y="15" width="14" height="12" rx="1.500"/><rect x="17" y="15" width="14" height="12" rx="1.500"/><rect x="34" y="15" width="14" height="12" rx="1.500"/><rect y="30" width="14" height="12" rx="1.500"/><rect x="17" y="30" width="14" height="12" rx="1.500"/><rect x="34" y="30" width="14" height="12" rx="1.500"/></g></svg>
            <svg class="v-net" viewBox="0 0 60 48"><path d="M20 2q0-2 2-2h16q2 0 2 2v14q0 2-2 2h-6v4h26q2 0 2 2t-2 2H48v4h6q2 0 2 2v14q0 2-2 2H37q-2 0-2-2V32q0-2 2-2h6v-4H17v4h6q2 0 2 2v14q0 2-2 2H5q-2 0-2-2V32q0-2 2-2h7v-4H2q-2 0-2-2t2-2h26v-4h-6q-2 0-2-2zM26 6v6h8V6zM10 36v6h8v-6zM42 36v6h7v-6z" fill="#4b5866" fill-rule="evenodd"/></svg>
            <svg class="v-list" viewBox="0 0 48 42"><g fill="#91a1ae"><rect width="14" height="12" rx="1.500"/><rect x="17" width="31" height="12" rx="1.500"/><rect y="15" width="14" height="12" rx="1.500"/><rect x="17" y="15" width="31" height="12" rx="1.500"/><rect y="30" width="14" height="12" rx="1.500"/><rect x="17" y="30" width="31" height="12" rx="1.500"/></g></svg>
            <a>Log out</a>
          </div>
        </div>

        <div class="status">
          <section class="s-health">
            <h4>APP HEALTH<svg><use href="#help"/></svg></h4>
            <h2><svg><use href="#heart"/></svg>Healthy</h2>
          </section>
          <section class="s-block">
            <h4>CURRENT SYNC STATUS<svg><use href="#help"/></svg><em>MORE</em></h4>
            <h2><svg><use href="#check"/></svg>Synced<small>To <a>HEAD (c812414)</a></small></h2>
            <dl><dt>Author:</dt><dd>meetarun &lt;meetarun@live.com&gt; -</dd><dt>Comment:</dt><dd>add master values file</dd></dl>
          </section>
          <section class="s-block last">
            <h4>LAST SYNC RESULT<svg><use href="#help"/></svg><em>MORE</em></h4>
            <h2><svg><use href="#check"/></svg><span class="ok">Sync OK</span><small>To <a>c812414</a></small></h2>
            <p>Succeeded 2 days ago (Fri Oct 29 2021 18:23:33 GMT+0530)</p>
            <dl><dt>Author:</dt><dd>meetarun &lt;meetarun@live.com&gt; -</dd><dt>Comment:</dt><dd>add master values file</dd></dl>
          </section>
        </div>

        <div class="canvas">
          <svg class="edges" viewBox="340 790 3044 1300">
            <g fill="none" stroke-width="6" stroke-dasharray="20 20">
              <g stroke="#4dade3">
                <path d="M1646 992L1846 898"/><path d="M1850 896L1872 898" stroke-dasharray="3 22"/>
                <path d="M1823 1043h20M1858 1044L1990 1083"/>
                <path d="M1585 1104L1846 1326M1860 1332L1914 1343"/>
              </g>
              <path stroke="#9fd293" d="M1823 933l20 1"/><path stroke="#9fd293" stroke-dasharray="3 22" d="M1850 934L1872 933"/>
              <path stroke="#ecbf4e" d="M1823 1139l20-3"/><path stroke="#ecbf4e" stroke-dasharray="3 22" d="M1852 1136.500L1872 1137"/>
              <g stroke="#ef716d"><path d="M1711 1441L1846 1404"/><path stroke-dasharray="3 22" d="M1850 1403H1872"/></g>
              <g stroke="#430e7c">
                <path d="M1572 1266L1848 1003"/><path stroke-dashoffset="10" d="M1852 1003L1975 968.500"/>
                <path d="M1823 1273l20-3"/><path stroke-dashoffset="6" d="M1851 1271L2046 1192"/>
                <path d="M1644 1373L1846 1463M1860 1464L1914 1451"/>
              </g>
              <g stroke="#8d501c">
                <path d="M1611 1621L1847 1507"/><path stroke-dasharray="3 22" d="M1850 1505L1872 1507"/>
                <path d="M1824 1621l19-3M1860 1618L1914 1630"/>
                <path d="M1639 1711L1846 1790"/><path stroke-dasharray="3 22" d="M1850 1791L1872 1795"/>
              </g>
              <g stroke="#3a82b3">
                <path d="M1597 1747L1848 1581"/><path stroke-dasharray="3 22" d="M1850 1578L1872 1575"/>
                <path d="M1824 1755l19-3M1860 1751L1914 1739"/>
                <path d="M1784 1850L1846 1857"/><path stroke-dasharray="3 22" d="M1850 1858L1872 1857"/>
              </g>
            </g>
            <g stroke-width="6">
              <path stroke="#4dade3" d="M1874 897h12"/>
              <path stroke="#9fd293" d="M1874 933h12"/>
              <path stroke="#ecbf4e" d="M1875 1137h12"/>
              <path stroke="#ef716d" d="M1873 1403h13"/>
              <path stroke="#8d501c" d="M1873 1507h13M1873 1795l13 2"/>
              <path stroke="#3a82b3" d="M1873 1575l13-1M1873 1857h13"/>
            </g>
            <g fill="#499fb2">
              <path d="M1884 890.500l14.500 8.500-14.500 8.500zM1884 924.500l14.500 8.500-14.500 8.500zM1885 1129l14.500 8.500-14.500 8.500zM1884 1395l14.500 8-14.500 9zM1884 1500.500l14.500 8.500-14.500 8.500zM1884 1566l14.500 7-14.500 9.500zM1884 1790.500l14.500 8.500-14.500 7zM1884 1848.500l14.500 8.500-14.500 8.500z"/>
              <path d="M1982 967l-17 2 7 11zM2053 1188l-13 2 6 13zM1986 1073l10 11.500h-14zM1910 1334l11 11h-16zM1923 1449l-15-1 4 13zM1912 1622l10 11h-16zM1923 1738l-15 0 5 12z"/>
            </g>
          </svg>

          <article class="node" style="left:900px;top:72px"><div class="kind"><svg class="k-svc"><use href="#svc"/></svg><span>svc</span></div><div class="info"><h5>checkoutkafka-0-external</h5><svg><use href="#heart"/></svg><svg><use href="#check"/></svg></div><i class="dots"></i><div class="tags"><span>2 days</span></div></article>
          <article class="node" style="left:900px;top:206px"><div class="kind"><svg class="k-svc"><use href="#svc"/></svg><span>svc</span></div><div class="info"><h5>checkoutkafka</h5><svg><use href="#heart"/></svg><svg><use href="#check"/></svg></div><i class="dots"></i><div class="tags"><span>2 days</span></div></article>
          <article class="node" style="left:900px;top:340px"><div class="kind"><svg class="k-svc"><use href="#svc"/></svg><span>svc</span></div><div class="info"><h5>checkoutkafka-1-external</h5><svg><use href="#heart"/></svg><svg><use href="#check"/></svg></div><i class="dots"></i><div class="tags"><span>2 days</span></div></article>
          <article class="node" style="left:900px;top:474px"><div class="kind"><svg class="k-svc"><use href="#svc"/></svg><span>svc</span></div><div class="info"><h5>checkoutkafka-headless</h5><svg><use href="#heart"/></svg><svg><use href="#check"/></svg></div><i class="dots"></i><div class="tags"><span>2 days</span></div></article>
          <article class="node" style="left:900px;top:648px"><div class="kind"><svg class="k-svc"><use href="#svc"/></svg><span>svc</span></div><div class="info"><h5>checkoutkafka-2-external</h5><svg><use href="#heart"/></svg><svg><use href="#check"/></svg></div><i class="dots"></i><div class="tags"><span>2 days</span></div></article>
          <article class="node" style="left:900px;top:822px"><div class="kind"><svg class="k-svc"><use href="#svc"/></svg><span>svc</span></div><div class="info"><h5>checkoutkafka-zookeeper</h5><svg><use href="#heart"/></svg><svg><use href="#check"/></svg></div><i class="dots"></i><div class="tags"><span>2 days</span></div></article>
          <article class="node" style="left:900px;top:956px"><div class="kind"><svg class="k-svc"><use href="#svc"/></svg><span>svc</span></div><div class="info"><h5>checkoutkafka-zookeeper-hea...</h5><svg><use href="#heart"/></svg><svg><use href="#check"/></svg></div><i class="dots"></i><div class="tags"><span>2 days</span></div></article>

          <article class="node" style="left:1564px;top:72px"><div class="kind"><svg class="k-pod"><use href="#pod"/></svg><span>pod</span></div><div class="info"><h5>checkoutkafka-0</h5><svg><use href="#heart"/></svg></div><i class="dots"></i><div class="tags"><span>2 days</span><span>running</span><span>1/1</span><span>2</span></div></article>
          <article class="node" style="left:1564px;top:294px"><div class="kind"><svg class="k-pod"><use href="#pod"/></svg><span>pod</span></div><div class="info"><h5>checkoutkafka-1</h5><svg><use href="#heart"/></svg></div><i class="dots"></i><div class="tags"><span>2 days</span><span>running</span><span>1/1</span><span>4</span></div></article>
          <article class="node" style="left:1564px;top:554px"><div class="kind"><svg class="k-pod"><use href="#pod"/></svg><span>pod</span></div><div class="info"><h5>checkoutkafka-2</h5><svg><use href="#heart"/></svg></div><i class="dots"></i><div class="tags"><span>2 days</span><span>running</span><span>1/1</span><span>4</span></div></article>
          <article class="node" style="left:1564px;top:688px"><div class="kind"><svg class="k-pod"><use href="#pod"/></svg><span>pod</span></div><div class="info"><h5>checkoutkafka-zookeeper-0</h5><svg><use href="#heart"/></svg></div><i class="dots"></i><div class="tags"><span>2 days</span><span>running</span><span>1/1</span></div></article>
          <article class="node" style="left:1564px;top:842px"><div class="kind"><svg class="k-pod"><use href="#pod"/></svg><span>pod</span></div><div class="info"><h5>checkoutkafka-zookeeper-1</h5><svg><use href="#heart"/></svg></div><i class="dots"></i><div class="tags"><span>2 days</span><span>running</span><span>1/1</span></div></article>
          <article class="node" style="left:1564px;top:996px"><div class="kind"><svg class="k-pod"><use href="#pod"/></svg><span>pod</span></div><div class="info"><h5>checkoutkafka-zookeeper-2</h5><svg><use href="#heart"/></svg></div><i class="dots"></i><div class="tags"><span>2 days</span><span>running</span><span>1/1</span></div></article>
        </div>
      </div>
    </div>
  </section>

  <nav class="menubar">
    <svg class="apple" viewBox="0 0 384 512"><path fill="#fff" d="M318.7 268.7c-.2-36.7 16.4-64.4 50-84.8-18.8-26.9-47.2-41.7-84.7-44.6-35.5-2.8-74.3 20.7-88.5 20.7-15 0-49.4-19.7-76.4-19.7C63.3 141.2 4 184.8 4 273.5q0 39.3 14.4 81.2c12.8 36.7 59 126.700 107.2 125.2 25.2-.6 43-17.9 75.8-17.9 31.8 0 48.3 17.9 76.4 17.9 48.6-.7 90.4-82.5 102.6-119.300-65.2-30.7-61.7-90-61.7-91.900zm-56.6-164.200c27.3-32.400 24.800-61.900 24-72.500-24.100 1.400-52 16.400-67.900 34.900-17.500 19.800-27.800 44.300-25.600 71.900 26.100 2 49.900-11.400 69.500-34.300z"/></svg>
    <b>Chrome</b><span>File</span><span>Edit</span><span>View</span><span>History</span><span>Bookmarks</span><span>Profiles</span><span>Tab</span><span>Window</span><span>Help</span>
    <svg class="tray" viewBox="2150 0 1126 48">
      <rect x="2162" y="8" width="32" height="32" rx="8" fill="#f2f4f8"/><path d="M2167 20q0-2 2-2h11q3 0 3 3v9h-13q-3 0-3-3zM2185 22l4-3v11l-4-3z" fill="#2f6ca6"/>
      <circle cx="2243" cy="24" r="15" fill="#dfe3de" stroke="#5c6b70"/><path d="M2230 32q2-12 12-11 1-8 6-11M2243 21q2 12 12 10" fill="none" stroke="#6fa843" stroke-width="4"/><circle cx="2258" cy="28" r="10" fill="#f4d63c" stroke="#fff" stroke-width="1.500"/><path d="M2258 21v8.500M2258 32v3" stroke="#111" stroke-width="3"/>
      <g fill="#fff"><path d="M2307 25h22v4q-2 9-12 9-9 0-10-13zM2309 18h5v5h-5zM2315 18h5v5h-5zM2321 18h5v5h-5zM2315 12h5v5h-5zM2321 12h5v5h-5z"/></g><circle cx="2334" cy="31" r="9.500" fill="#3676b0" stroke="#fff" stroke-width="2"/><path d="M2334 25v7M2334 34v3" stroke="#fff" stroke-width="3"/>
      <path d="M2384 32q-8-9 2-14 6-8 14-4 9-2 12 6 7 7 0 13-6 3-14 1-8 1-14-2z" fill="#55addc"/><path d="M2389 25q5-7 15-7M2396 33q-2-9 6-10 8-1 10 4" fill="none" stroke="#3478b2" stroke-width="2"/>
      <rect x="2450" y="6" width="33" height="34" rx="4" fill="#4f9a3e"/><path d="M2458 33V12h17" fill="none" stroke="#fff" stroke-width="4"/><path d="M2465 18l11 6-11 6z" fill="#fff"/><circle cx="2479" cy="34" r="8" fill="#77b845"/><path d="M2475 34l3 3 5-6" fill="none" stroke="#fff" stroke-width="2"/>
      <path d="M2529 13l-8 5v11l4 3M2534 13l8 5v11l-4 3" fill="none" stroke="#fff" stroke-width="4.400"/><path d="M2525 30h13l-6.500 8z" fill="#fff"/>
      <circle cx="2597" cy="24" r="13.500" fill="none" stroke="#fff" stroke-width="5"/><circle cx="2597" cy="24" r="5.500" fill="#fff"/>
      <g stroke="#8fb3d8" fill="none"><circle cx="2674" cy="24" r="16.500" stroke-width="2"/><circle cx="2671" cy="19" r="5" stroke-width="3"/><path d="M2674 23l9 11" stroke-width="3.500"/></g>
      <path d="M2740 8h8v5l1 3h2l1-3V8h8v7l4 12v11h-11V26h-6v12h-12V27l4-12z" fill="#f4f6fa"/>
      <path d="M2806 19h5l8-7v24l-8-7h-5z" fill="#fff"/><path d="M2824 18q3 6 0 12M2830 15q5 9 0 18M2836 12q7 12 0 24" fill="none" stroke="#fff" stroke-width="2.400"/>
      <rect x="2880" y="13" width="28" height="22" rx="4" fill="none" stroke="#fff" stroke-width="2.600"/><path d="M2880 18h28M2884 23h8M2884 27h8M2884 31h8M2896 22h8v8h-8z" stroke="#fff" stroke-width="2.200" fill="none"/>
      <path d="M2954 17l14 14-7 6V10l7 6-14 14" fill="none" stroke="#fff" stroke-width="2.600"/>
      <rect x="3011" y="13" width="44" height="22" rx="6" fill="none" stroke="#bcd0e6" stroke-width="2"/><rect x="3014" y="16" width="30" height="16" rx="3.500" fill="#fff"/><path d="M3058 20q4 4 0 8z" fill="#bcd0e6"/>
      <path d="M3099 20q15-13 30 0M3104.500 26q9.500-8 19 0" fill="none" stroke="#fff" stroke-width="4"/><path d="M3108 30q6-5 12 0l-6 6z" fill="#fff"/>
      <circle cx="3179" cy="22" r="9" fill="none" stroke="#fff" stroke-width="2.600"/><path d="M3185 29l7 7" stroke="#fff" stroke-width="3"/>
      <rect x="3233" y="12" width="26" height="11" rx="5.500" fill="none" stroke="#fff" stroke-width="2.200"/><circle cx="3238.500" cy="17.500" r="4" fill="#fff"/><rect x="3232" y="26" width="28" height="13" rx="6.500" fill="#fff"/><circle cx="3253" cy="32.500" r="4" fill="#3672ae"/>
    </svg>
    <time>Sun 31 Oct&nbsp; 3:28 PM</time>
  </nav>

  <nav class="dock">
    <svg viewBox="0 0 136 158"><rect x="17" y="22" width="102" height="103" rx="23" fill="url(#gFinder)"/><path d="M73 22h23q23 0 23 23v57q0 23-23 23H82q-4-18-5-42H61q-1-28 12-61z" fill="url(#gFinder2)"/><path d="M44 53v10M93 53v10" stroke="#2c3440" stroke-width="4.500" stroke-linecap="round"/><path d="M38 93q30 26 60 0" fill="none" stroke="#20252c" stroke-width="4" stroke-linecap="round"/><circle cx="68" cy="150" r="4" fill="#636266"/></svg>
    <svg viewBox="0 0 136 158"><circle cx="68" cy="74" r="54.500" fill="#e6e8e9" stroke="#5d7d94"/><path d="M17 76q4-36 40-40 18-1 24 12" fill="none" stroke="#72ab42" stroke-width="13"/><path d="M66 40q4-14 17-23" fill="none" stroke="#72ab42" stroke-width="13"/><path d="M66 38q-2 36 30 52h26" fill="none" stroke="url(#gAny)" stroke-width="12"/><path d="M72 44q34 22 25 62-2 8-9 14" fill="none" stroke="#4691cf" stroke-width="12"/><circle cx="36" cy="106" r="31" fill="#fff" stroke="#666"/><circle cx="36" cy="106" r="26" fill="#f5d447"/><path d="M36 85v32M36 122v6" stroke="#111" stroke-width="7"/><circle cx="68" cy="150" r="4" fill="#636266"/></svg>
    <svg viewBox="0 0 136 158"><rect x="17" y="22" width="102" height="103" rx="23" fill="url(#gWhite)"/><circle cx="68" cy="74" r="44" fill="url(#gSafari)"/><circle cx="68" cy="74" r="38" fill="none" stroke="#d5e8fb" stroke-width="6" stroke-dasharray="1.200 3.800"/><path d="M99 43L62 68l12 12z" fill="#df4b40"/><path d="M37 105l25-37 12 12z" fill="#f3f3f3"/></svg>
    <svg viewBox="0 0 136 158"><rect x="11" y="17" width="114" height="114" rx="27" fill="url(#gZoom)"/><path d="M33 58q0-4 4-4h35q12 0 12 12v28H45q-12 0-12-12zM88 68l13-13q3-1 3 2v34q0 3-3 2L88 81z" fill="#fff"/><circle cx="68" cy="150" r="4" fill="#636266"/></svg>
    <svg viewBox="0 0 136 158"><rect x="17" y="22" width="102" height="103" rx="23" fill="#fcfcfc"/><g stroke-width="15" stroke-linecap="round"><path d="M39.500 64h19" stroke="#66c2ec"/><path d="M79 46v18" stroke="#5bb083"/><path d="M79 90h19" stroke="#e1b44b"/><path d="M60 90v23" stroke="#cb375a"/></g><path d="M60.500 38q7.500 0 7.500 7.500v7.500h-7.500a7.500 7.500 0 0 1 0-15z" fill="#66c2ec"/><path d="M105 64q0 7.500-7.500 7.500H90V64a7.500 7.500 0 0 1 15 0z" fill="#5bb083"/><path d="M79 121q-7.500 0-7.500-7.500V106H79a7.500 7.500 0 0 1 0 15z" fill="#e1b44b"/><path d="M33 90q0-7.500 7.500-7.500H48V90a7.500 7.500 0 0 1-15 0z" fill="#cb375a"/><circle cx="68" cy="150" r="4" fill="#636266"/></svg>
    <svg viewBox="0 0 136 158"><path d="M13 36q0-5 5-5h101q5 0 5 5v72H13z" fill="#403f44"/><path d="M18 38h100v66H18z" fill="#56555c"/><path d="M5 109h126v4q0 3-5 3H10q-5 0-5-3z" fill="#d4d6dd"/><path d="M51 109h34q0 3-4 3H55q-4 0-4-3z" fill="#a9abb2"/><circle cx="33" cy="54" r="11" fill="#d24a3d"/><path d="M22 54a11 11 0 0 0 11 11l-4-9zM24 48l-2 8 6 8z" fill="#449b52"/><path d="M33 54h11a11 11 0 0 1-11 11z" fill="#f3c945"/><circle cx="33" cy="54" r="5.500" fill="#4a84e8" stroke="#fff"/><rect x="53" y="49" width="17" height="20" fill="#b95be8"/><rect x="47" y="53" width="12" height="13" fill="#6d2aa0"/><rect x="29" y="64" width="33" height="34" rx="9" fill="#4a86f5"/><path d="M36 76h12q3 0 3 3v8H39q-3 0-3-3zM52 80l4-3v10l-4-3z" fill="#fff"/><path d="M84 56q2-6 8-7l4-4q1-7 3-9 2 5 2 11l3 3q3-3 9-3-1 9-7 12-3 8-9 8l5 2 4 6-2 3-4-3-1 8 2 14h-4l-3-12-3 12h-4l3-15-3-5-3 3-2-3 5-8q-8 2-9-4 1-6 6-9z" fill="#fff"/><circle cx="95" cy="57" r="6" fill="#fff" stroke="#c92a2a" stroke-width="3"/><circle cx="95" cy="57" r="1.800" fill="#c92a2a"/><circle cx="81" cy="62" r="3.600"/></svg>
    <i class="dock-sep"></i>
    <svg viewBox="0 0 136 158"><circle cx="68" cy="74" r="55" fill="#eef0ee"/><circle cx="68" cy="74" r="51" fill="url(#gAtom)"/><g fill="none" stroke="#eef8ee" stroke-width="3.500"><ellipse cx="68" cy="74" rx="35" ry="13" transform="rotate(8 68 74)"/><ellipse cx="68" cy="74" rx="35" ry="13" transform="rotate(68 68 74)"/><ellipse cx="68" cy="74" rx="35" ry="13" transform="rotate(120 68 74)"/></g><circle cx="68" cy="74" r="4" fill="#eef8ee"/><circle cx="68" cy="150" r="4" fill="#636266"/></svg>
    <svg viewBox="0 0 136 158"><rect x="12" y="24" width="112" height="99" rx="4" fill="#a9b6bf"/><rect x="13" y="26" width="110" height="96" rx="3" fill="#22292c"/><text x="18" y="62" class="prompt">$</text><rect x="43" y="34" width="17" height="33" fill="#377a2c"/><circle cx="68" cy="150" r="4" fill="#636266"/></svg>
    <svg viewBox="0 0 136 158"><rect x="17" y="22" width="102" height="103" rx="23" fill="url(#gWhite)"/><circle cx="68" cy="74" r="43" fill="#3d8e54"/><path d="M68 74L31 52.500A43 43 0 0 1 105 53H68z" fill="#cb4c3e"/><path d="M68 53h37a43 43 0 0 1-38 64l19-33z" fill="#f6ca50"/><path d="M31 52.500L50 84l18-10-6-21z" fill="#cb4c3e"/><circle cx="68" cy="74" r="20" fill="#f5f5f5"/><circle cx="68" cy="74" r="15.500" fill="#5186ee"/><circle cx="68" cy="150" r="4" fill="#636266"/></svg>
    <svg viewBox="0 0 136 158"><rect x="18" y="23" width="101" height="103" rx="23" fill="#90979a"/><rect x="19" y="27" width="99" height="96" rx="22" fill="#000"/><rect x="28" y="34" width="80" height="80" rx="10" fill="#1b2928"/><path d="M28 50h80M28 62h80M28 74h80M28 87h80M28 99h80M41 34v80M54 34v80M67 34v80M80 34v80M93 34v80" stroke="#3d5f59" stroke-width="1"/><path d="M28 80q8 4 11 4l4 1 4-44 4 58 3-18q6 4 9 1 6-18 11-14 4 16 9 16 8-12 10-7l8 4" fill="none" stroke="#8ad6c9" stroke-width="2.400"/><circle cx="68" cy="150" r="4" fill="#636266"/></svg>
    <svg viewBox="0 0 136 158"><circle cx="68" cy="74" r="56" fill="#66b7f8"/><circle cx="68" cy="74" r="53" fill="#4dabf6"/><g fill="#fff"><path d="M33 72h59q4-1 4-5-3-6 1-11 5 3 6 7 5 0 6 2-3 8-13 9-5 25-38 25-25-1-25-27z"/><path d="M39 63h8v7h-8zM48.500 63h8v7h-8zM58 63h8v7h-8zM67.500 63h8v7h-8zM77 63h8v7h-8zM48.500 54h8v7h-8zM58 54h8v7h-8zM67.500 54h8v7h-8zM67.500 46h8v7h-8z"/></g><circle cx="68" cy="150" r="4" fill="#636266"/></svg>
    <svg viewBox="0 0 136 158"><path d="M28 17l16 4 22 0 12 60-8 30-46 18 6-40-18-4 20-18-10-20 18-14-20 2z" fill="url(#gJetA)"/><path d="M44 21l22 0 20 40-20 30z" fill="#e9395f"/><path d="M90 18l36 42-10 20 6 40-42 12-20-20z" fill="url(#gJetB)"/><path d="M90 18L78 60l48 0-10 22-20 46" fill="#3a86f2" opacity=".5"/><rect x="32" y="38" width="72" height="72" fill="#15100f"/><text x="40" y="73" class="ij">IJ</text><path d="M41 96h27v4.500H41z" fill="#fff"/><circle cx="68" cy="150" r="4" fill="#636266"/></svg>
    <svg viewBox="0 0 136 158"><rect x="16" y="22" width="104" height="104" rx="24" fill="#ed7546"/><g fill="#fff"><circle cx="92" cy="50" r="8.500"/><path d="M85 54q-13 6-19 19l-13 17q8 2 10 5l-21 22-7 9 12-1 5-9 26-23q12-14 12-34z"/></g><path d="M87 60L63 94M80 58L57 91M92 50l5-5M92 50l5 5" stroke="#ed7546" stroke-width="1.800"/><circle cx="68" cy="150" r="4" fill="#636266"/></svg>
    <i class="dock-sep"></i>
    <svg viewBox="0 0 136 158"><path d="M8 32q0-7 7-7h24q5 0 8 4l5 6h68q7 0 7 7v60H8z" fill="#3f8ecb"/><path d="M8 42h119v74q0 7-7 7H15q-7 0-7-7z" fill="#81c7f6"/><path d="M10 112h115" stroke="#67b0e2" stroke-width="2"/><g stroke="#5599cf" stroke-width="6" stroke-linecap="round"><path d="M63 60l22 40M73 60L52 96M47 90h42M50 106l3-5M89 106l-3-5"/></g></svg>
    <svg viewBox="0 0 136 158"><circle cx="64" cy="47" r="37" fill="#24585b"/><circle cx="99" cy="86" r="33" fill="url(#gTeal)"/><circle cx="68" cy="111" r="26" fill="#62dfe8"/><rect x="4" y="41" width="64" height="64" rx="5" fill="url(#gShare)"/><text x="36" y="90" text-anchor="middle" class="sp">S</text></svg>
    <svg viewBox="0 0 136 158"><path d="M23 32q4 0 90 0l-12 88q-2 10-14 11H51q-12-1-14-11z" fill="url(#gTrash)"/><ellipse cx="68" cy="36" rx="45" ry="13" fill="#b9babb"/><path d="M29 40l4-16 10-4 4-8 6 8 12 4 8-10 8 4 8 8 14 2 4 12-14 8-20 3-26-1z" fill="#ededec"/><path d="M40 26l8 6-6 8zM72 24l10-4 4 14-10 6zM92 32l12-4-2 14zM52 34l6 8-8 6z" fill="#55585c"/><path d="M54 28l8 6-4 4z" fill="#4db2dc"/><path d="M76 36l10 4-6 4z" fill="#c2703d"/><path d="M45 60q10 10 25 4M50 80q20 14 34 2" fill="none" stroke="#f0efef" stroke-width="6" opacity=".7"/></svg>
  </nav>
</main>
</body>
</html>
```

FILE: styles.css
```css
:root {
  --ui: Inter, "Liberation Sans", sans-serif;
  --app: Roboto, "Liberation Sans", sans-serif;
  --teal: #449fb2;
  --ink: #4b5866;
}

* { box-sizing: border-box; }
html, body { margin: 0; padding: 0; }
body { width: 3584px; height: 2240px; overflow: hidden; font-family: var(--ui); }
h2, h4, h5, p, dl, dd { margin: 0; font-weight: 400; }
svg { display: block; flex: none; }
.defs { position: absolute; }

.desktop {
  position: relative;
  width: 3584px;
  height: 2240px;
  overflow: hidden;
  background:
    linear-gradient(90deg, #d63a66, #d4426c 660px, transparent 700px) 0 0 / 100% 110px no-repeat,
    linear-gradient(180deg, #2b6bae 0, #2b6bae 300px, #2b3f6c 2070px, #1c4065 2240px);
}
.wallpaper-logo { position: absolute; left: 3390px; top: 61px; width: 130px; height: 130px; }

.win { position: absolute; overflow: hidden; }

/* chat */
.chat { left: 264px; top: 1900px; width: 3340px; height: 360px; background: #fff; box-shadow: 0 0 40px rgba(0,0,0,.3); }
.chat-pane { position: relative; height: 100%; margin-left: 367px; padding-top: 257px; border-left: 2px solid #c8ccd2; }
.chat-word { position: absolute; left: 266px; top: 312px; width: 108px; height: 36px; padding-left: 32px; background: #e1e4e8; border-right: 2px solid #555; font: 28px/34px "Liberation Mono", monospace; color: #222; }
.chat-dot { position: absolute; left: 757px; top: 300px; width: 44px; height: 34px; border-radius: 50%; background: #16181c; }
.composer { width: 2481px; height: 78px; border: 3px solid #c9ced4; border-radius: 10px; background: #f7f8fa; display: flex; justify-content: flex-end; padding-top: 18px; }
.composer-icons { width: 120px; height: 40px; margin-right: 15px; }

/* right browser */
.side-browser { left: 559px; top: 174px; width: 3060px; height: 1946px; border-radius: 20px; background: #fff; display: flex; flex-direction: column; box-shadow: 0 24px 60px rgba(0,0,0,.42), 0 0 0 1px rgba(0,0,0,.25); }
.sb-strip { height: 84px; background: #dfe1e7; }
.sb-tools { height: 137px; border-bottom: 2px solid #cfd1d4; padding: 86px 0 0 2997px; font-size: 25px; line-height: 30px; color: #55585c; }
.sb-page { flex: 1; background: linear-gradient(90deg, #fff 2900px, #d8d8d8 2993px, #f4f4f4); border-top: 12px solid #f2f2f2; border-bottom: 2px solid #bfc0c2; }
.sb-foot { height: 111px; display: flex; justify-content: flex-end; padding-top: 24px; background: #f7f7f7; }
.sb-foot span { width: 128px; height: 64px; padding-left: 32px; border: 2px solid #dcdcdc; border-radius: 8px; font: 500 28px/60px var(--ui); color: #6a6c70; }

/* editors */
.editor { border-radius: 20px; background: #22252a; box-shadow: 0 20px 50px rgba(0,0,0,.35), 0 0 0 1px rgba(0,0,0,.3); }
.editor-a { left: 0; top: 50px; width: 3000px; height: 2020px; display: flex; flex-direction: column; }
.editor-b { left: 512px; top: 50px; width: 2798px; height: 1900px; }
.ed-title { height: 56px; flex: none; display: flex; align-items: center; gap: 16px; padding: 0 16px; background: #ece8e8; border-bottom: 2px solid #0d0e10; }
.editor-b .ed-title { background: linear-gradient(#eae6e6, #c2bebe 40px); }
.editor-b .ed-title .dot { background: #c3bfbf; }
.dot { width: 24px; height: 24px; border-radius: 50%; background: #d2cece; border: 1px solid #bab6b6; flex: none; }
.dot.edited { background: radial-gradient(circle, #555 4px, #d2cece 5px); }
.ed-title .doc { width: 26px; height: 34px; margin-left: 988px; margin-top: 20px; }
.ed-title span { margin-left: -9px; font: 700 26px/52px var(--ui); letter-spacing: .12px; color: #8f8c8c; margin-top: -2px; }
.tree { flex: 1; overflow: hidden; padding-top: 55px; border-left: 2px solid #2f3238; font-size: 24px; color: #9199a8; }
.row { position: relative; height: 48px; display: flex; align-items: center; }
.row.gap { height: 288px; }
.row span { margin-left: 15px; letter-spacing: -.2px; line-height: 48px; white-space: nowrap; }
.row .cr { width: 12px; height: 20px; margin-left: -26px; margin-right: 14px; }
.row .cd { width: 20px; height: 12px; margin-left: -32px; margin-right: 12px; }
.row .fo { width: 28px; height: 24px; }
.row .fi { width: 24px; height: 28px; margin-right: 4px; }
.row .bo { width: 30px; height: 24px; margin-right: -2px; }
.d1 { padding-left: 100px; }
.d2 { padding-left: 134px; }
.d3 { padding-left: 168px; }
.d4 { padding-left: 202px; }
.ed-status { height: 62px; padding-left: 15px; border-top: 2px solid #15171a; background: #22252a; font-size: 24px; line-height: 60px; color: #9da5b4; letter-spacing: -.1px; }

/* small windows */
.finder-a { left: 200px; top: 126px; width: 900px; height: 415px; border-radius: 22px; background: #e2e2e2; padding-top: 78px; box-shadow: 0 10px 30px rgba(0,0,0,.5); }
.finder-a .blue { height: 280px; background: #347fa6; border-top: 2px solid #a9a9a9; }
.finder-b { left: 200px; top: 543px; width: 900px; height: 394px; border-radius: 22px; background: #cfcfcf; box-shadow: 0 10px 30px rgba(0,0,0,.5); }
.finder-b .bar { height: 56px; background: #cfc8c9; border-bottom: 2px solid #b5afb0; }

.ide { left: 392px; top: 89px; width: 2799px; height: 1500px; border-radius: 20px; background: #2a2836; border-top: 3px solid #5c5b66; display: flex; align-items: flex-start; gap: 16px; padding: 14px 16px; box-shadow: 0 10px 50px rgba(0,0,0,.5), 0 0 0 2px #0c0c12; }
.ide .dot { background: #45444f; border: none; }
.ide span { margin: -2px 0 0 1081px; font: 700 26px/26px var(--ui); letter-spacing: .4px; color: #5a5864; }

/* light browser */
.light { left: 388px; top: 122px; width: 3164px; height: 1946px; border-radius: 20px; background: #141619; display: flex; flex-direction: column; box-shadow: 0 24px 70px rgba(0,0,0,.45), 0 0 0 1px rgba(0,0,0,.2); }
.lt-strip { height: 83px; flex: none; display: flex; justify-content: space-between; background: #e0e2e6; padding: 16px 35px 0 190px; }
.lt-tab { width: 178px; height: 67px; border-radius: 16px 16px 0 0; background: #f7f8fa; }
.lt-chev { width: 20px; height: 14px; margin-top: 27px; }
.lt-tools { height: 139px; flex: none; background: #fff; border-bottom: 2px solid #c8cacc; padding: 12px 0 0 2996px; }
.lt-icons { width: 168px; height: 50px; }
.lt-tools span { display: block; margin-top: 23px; font-size: 24px; line-height: 32px; letter-spacing: -.1px; color: #5f6368; white-space: nowrap; }
.lt-page { flex: 1; border-right: 2px solid #2f3034; }
.lt-row { border-bottom: 2px solid #202226; display: flex; justify-content: flex-end; }
.lt-row.apply { height: 105px; padding: 20px 14px 0 0; }
.lt-row.apply b { width: 138px; height: 64px; background: linear-gradient(#4477d6, #325fbb); text-align: center; border-radius: 3px; color: #fff; font: 600 26px/64px var(--ui); letter-spacing: -.6px; }
.lt-row.next { height: 116px; padding: 35px 14px 0 0; background: #0b0c0e; }
.lt-row.next span { width: 72px; height: 64px; border: 2px solid #2c2e32; background: #141518; display: flex; align-items: center; justify-content: center; }
.lt-row.next svg { width: 10px; height: 16px; }
.lt-input { width: 240px; height: 62px; margin: 126px 0 0 2891px; background: #0b0c0e; border: 2px solid #2c3033; border-radius: 4px; }
.lt-area { position: relative; width: 240px; height: 96px; margin: 106px 0 0 2891px; padding: 4px 0 0 103px; background: #0b0c0e; border: 2px solid #2c3033; border-radius: 4px; color: #c7cbd2; font: 500 26px/42px var(--ui); letter-spacing: -.3px; }
.lt-area p { white-space: nowrap; font-weight: 500; }
.lt-area svg { position: absolute; right: 2px; bottom: 0; width: 16px; height: 14px; }
.lt-sep { height: 90px; margin-top: 211px; border: solid #202226; border-width: 2px 0; }

/* main browser */
.browser { left: 220px; top: 145px; width: 3164px; height: 1945px; border-radius: 20px; background: #35363a; display: flex; flex-direction: column; box-shadow: 0 36px 90px rgba(0,0,0,.55), 0 0 50px rgba(0,0,0,.4), 0 0 0 1px rgba(0,0,0,.45); }
.tabs { height: 83px; flex: none; display: flex; background: #202124; box-shadow: inset 0 2px 0 #5c5d60; }
.lights { width: 186px; display: flex; gap: 16px; padding: 30px 0 0 42px; }
.lights i { width: 24px; height: 24px; border-radius: 50%; background: #ec6a5e; }
.lights i:nth-child(2) { background: #f4bf4f; }
.lights i:nth-child(3) { background: #61c554; }
.tab-active { position: relative; width: 65px; height: 68px; margin: 15px -2px 0 0; border-radius: 16px 16px 0 0; background: #35363a; display: flex; align-items: center; justify-content: center; }
.tab-active::before, .tab-active::after { content: ""; position: absolute; bottom: 0; width: 16px; height: 16px; }
.tab-active::before { right: 100%; background: radial-gradient(circle at 0 0, transparent 15.500px, #35363a 16px); }
.tab-active::after { left: 100%; background: radial-gradient(circle at 100% 0, transparent 15.500px, #35363a 16px); }
.tab-active svg { width: 20px; height: 20px; }
.slot { width: 50px; height: 40px; margin-top: 29px; border-right: 2px solid #56575a; display: flex; align-items: center; justify-content: center; }
.slot.thin { width: 48px; }
.slot svg { width: 32px; height: 32px; }
.dim { fill: #2a2b2e; }
.black { fill: #0c0b0a; }
.lit { color: #f1f3f4; }
.grey { color: #777; }
.cnc { font: 700 14px "DejaVu Sans Mono", monospace; fill: #fff; }
.plus { width: 24px; height: 24px; margin: 37px 0 0 31px; }
.more-tabs { width: 20px; height: 14px; margin: 43px 0 0 134px; }

.toolbar { height: 72px; flex: none; display: flex; align-items: center; padding-left: 30px; }
.nav { width: 28px; height: 28px; margin-right: 36px; }
.omnibox { width: 2588px; height: 56px; margin: 0 18px 0 -6px; padding: 0 21px 0 22px; border-radius: 28px; background: #202124; display: flex; align-items: center; }
.omnibox svg { width: 28px; height: 28px; }
.omnibox svg:last-child { width: 30px; height: 30px; }
.url { flex: 1; margin-left: 18px; font: 28px/56px var(--ui); letter-spacing: -.1px; color: #9aa0a6; }
.url b { font-weight: 400; color: #fff; }
.incog { width: 197px; height: 56px; padding-left: 4px; border: 2px solid #404146; border-radius: 28px; background: #232428; display: flex; align-items: center; font: 500 26px/52px var(--ui); letter-spacing: -.4px; color: #fff; }
.incog svg { width: 44px; height: 44px; margin: 0 15px 0 -2px; }
.kebab { width: 8px; height: 28px; margin-left: 33px; }

.bookmarks { height: 66px; flex: none; display: flex; align-items: center; padding: 0 30px 10px 28px; margin-bottom: -2px; border-bottom: 0; }
.bookmarks a { display: flex; align-items: center; font: 500 24px/32px var(--ui); letter-spacing: -.45px; color: #fff; white-space: nowrap; }
.bookmarks svg { width: 32px; height: 32px; margin-right: 16px; }
.w1 { width: 146px; }
.w2 { width: 177px; }
.w3 { width: 141px; }
.w4 { width: 152px; }
.w5 { width: 144px; }
.w6 { width: 292px; }
.w7 { width: 308px; }
.w8 { width: 306px; }
.w9 { width: 301px; }
.w10 { width: 302px; }
.w11 { width: 630px; }
.now { font: 15px "Open Sans", sans-serif; fill: #fff; }
.bookmarks .reading { height: 32px; padding-left: 20px; border-left: 2px solid #6a6b6e; letter-spacing: -.25px; }

.page { flex: 1; display: flex; border-top: 2px solid #5d5e61; margin-top: 0; min-height: 0; }
.side { width: 120px; flex: none; background: linear-gradient(#363636, #4b4b4b 600px, #676767 1270px, #9b9b9b); box-shadow: inset -10px 0 10px -6px rgba(0,0,0,.55); display: flex; flex-direction: column; align-items: center; }
.logo { width: 120px; height: 146px; }
.ver { font: 27px/34px var(--app); color: #fff; letter-spacing: .1px; white-space: nowrap; }
.side-icon { width: 62px; height: 62px; }
.side-icon.active { width: 120px; height: 102px; margin-top: 44px; padding: 22px 28px 18px 30px; border-left: 0; background: linear-gradient(#50b4cb, #50b4cb) 12px 0 / 6px 100% no-repeat; }
.gears { margin: 62px 0 0; width: 60px; height: 60px; }
.user { width: 66px; height: 66px; margin-top: 73px; }
.book { width: 42px; height: 56px; margin-top: 89px; }

.content { flex: 1; display: flex; flex-direction: column; font-family: var(--app); color: var(--ink); background: #fff; }
.crumbs { height: 102px; flex: none; border-bottom: 2px solid #edf0f3; display: flex; align-items: center; padding: 0 41px 2px 30px; font-size: 25.600px; }
.crumbs a { color: var(--teal); }
.crumbs svg { width: 22px; height: 44px; margin: 2px 14px 0 15px; }
.crumbs b { font-weight: 500; color: #363c4a; }
.crumbs strong { margin-left: auto; font-size: 29.500px; font-weight: 500; color: #2f6c85; }
.actions { height: 102px; flex: none; border-bottom: 2px solid #edf0f3; display: flex; align-items: center; gap: 4px; padding: 4px 0 0 30px; }
.actions button { height: 68px; margin: 0; padding: 0 0 0 26px; border: 0; border-radius: 34px; background: #6d7f8b; color: #fff; font: 500 26px/66px var(--app); display: flex; align-items: center; gap: 10px; white-space: nowrap; }
.actions button svg { width: 26px; height: 26px; }
.actions button .narrow { width: 20px; }
.actions button .caret { width: 16px; height: 8px; margin-left: -1px; }
.actions button.off { background: #ccd6dd; color: #6d7f8b; }
.b1 { width: 256px; }
.b2 { width: 202px; }
.b3 { width: 164px; }
.b4 { width: 266px; }
.b5 { width: 400px; }
.b6 { width: 189px; }
.b7 { width: 231px; }
.views { flex: 1; display: flex; align-items: center; justify-content: flex-end; padding: 0 30px 4px 0; }
.views a { font-size: 32px; color: var(--teal); margin-left: 16px; }
.v-filter { width: 48px; height: 28px; margin-right: 15px; }
.v-tree { width: 62px; height: 48px; margin-right: 31px; }
.v-grid { width: 48px; height: 42px; margin-right: 33px; }
.v-net { width: 60px; height: 48px; margin-right: 31px; }
.v-list { width: 48px; height: 42px; }

.status { position: relative; z-index: 1; height: 220px; flex: none; display: flex; padding: 6px 0 4px; background: #fff; box-shadow: 0 3px 10px rgba(60,75,85,.4); }
.status h4 { display: flex; align-items: center; font-size: 25.700px; line-height: 30px; }
.status h4 svg { width: 21px; height: 21px; margin-left: 7px; }
.status h2 { display: flex; align-items: center; font-size: 44.800px; line-height: 50px; height: 50px; }
.status h2 svg { width: 45px; height: 45px; margin-right: 11px; }
.s-health { width: 290px; padding: 15px 0 0 40px; border-right: 2px solid #dee3e7; }
.s-health h2 { margin-top: -1px; }
.s-block { width: 732px; padding: 10px 40px 0 40px; border-right: 2px solid #dee3e7; }
.s-block.last { border: 0; width: 730px; }
.s-block h4 { height: 40px; }
.s-block h2 { margin-top: -1px; }
.s-block em { margin-left: auto; width: 120px; height: 40px; border: 3px solid #52b3c9; border-radius: 20px; text-align: center; font: 500 25.600px/35px var(--app); color: var(--teal); }
.s-block small { margin-left: auto; font-size: 26px; font-weight: 500; }
.s-block small a { color: var(--teal); }
.ok { color: #58b994; }
.s-block dl { display: grid; grid-template-columns: 1fr auto; margin-top: 26px; font-size: 22.400px; line-height: 26px; }
.s-block dd { text-align: right; font-weight: 500; }
.s-block p { margin-top: 8px; font-size: 22.400px; line-height: 26px; }
.last dl { margin-top: 10px; }

.canvas { position: relative; flex: 1; background: #dee6e9; }
.edges { position: absolute; inset: 0; width: 3044px; height: 1300px; }
.node { position: absolute; width: 564px; height: 104px; border-radius: 8px; background: #fff; box-shadow: 1px 2px 3px rgba(150,165,175,.5); display: grid; grid-template-columns: 122px 1fr 61px; }
.kind { display: flex; flex-direction: column; align-items: center; padding: 22px 0 0 2px; font-size: 22px; line-height: 26px; }
.k-svc { width: 72px; height: 54px; margin: 1px 0 3px; }
.k-pod { width: 58px; height: 56px; margin-bottom: 2px; }
.node .info { padding: 22px 0 0 11px; white-space: nowrap; }
.info h5 { font-size: 25.600px; line-height: 30px; }
.info svg { display: inline-block; width: 26px; height: 26px; margin: 1px 4px 0 0; }
.dots { width: 13px; height: 42px; margin: 30px 0 0 24px; background: radial-gradient(circle, #449fb2 6.200px, transparent 6.800px) 0 0 / 13px 14px; }
.tags { position: absolute; right: 5px; top: 94px; display: flex; gap: 3px; }
.tags span { height: 32px; padding: 0 9px; border: 2px solid #91a1ae; border-radius: 10px; background: #ccd5dc; font-size: 19.800px; line-height: 28px; }

/* menu bar */
.menubar { position: absolute; left: 0; top: 0; width: 3584px; height: 48px; display: grid; grid-template-columns: 114px 142px 85px 88px 99px 129px 175px 133px 83px 138px 964px 1144px 1fr; align-items: center; background: linear-gradient(90deg, #8c5b8b 0, #86608f 260px, #6f6ea3 640px, #5580b4 1150px, #4280b7 1600px, #3a78b1 2300px, #2e68a8 3584px); font-size: 26px; letter-spacing: -.45px; color: #fff; text-shadow: 0 2px 6px rgba(0,0,0,.3); }
.menubar b { font-weight: 700; letter-spacing: -.5px; }
.apple { width: 27px; height: 36px; margin: -4px 0 0 43px; }
.tray { width: 1126px; height: 48px; filter: drop-shadow(0 2px 3px rgba(0,0,0,.25)); }
.menubar time { white-space: nowrap; letter-spacing: .2px; margin-top: -2px; }

/* dock */
.dock { position: absolute; left: 637px; top: 2072px; width: 2311px; height: 158px; padding-left: 3px; border-radius: 44px; border: 1px solid #b4b5b9; background: linear-gradient(#d1cfd2, #e5e3e7); display: flex; box-shadow: 0 0 70px rgba(0,0,0,.32), inset 0 2px 0 rgba(255,255,255,.35); }
.dock svg { width: 136.100px; height: 158px; margin-top: -1px; filter: drop-shadow(0 2px 2px rgba(0,0,0,.25)); }
.dock-sep { width: 62px; height: 118px; margin-top: 19px; background: linear-gradient(#8f8e93, #8f8e93) center / 2px 100% no-repeat; }
.prompt { font: 700 36px "Liberation Mono", monospace; fill: #6ee85a; }
.ij { font: 700 36px "Liberation Mono", monospace; fill: #fff; }
.sp { font: 700 46px "Open Sans", sans-serif; fill: #fff; }
```
